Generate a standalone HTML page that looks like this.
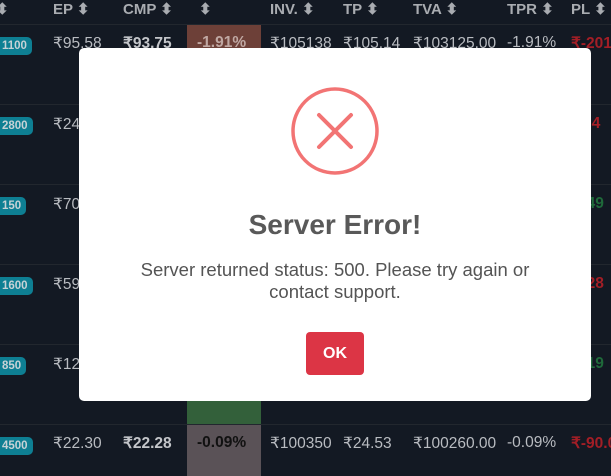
<!DOCTYPE html>
<html><head><style>
body{margin:0;width:611px;height:476px;overflow:hidden;background:#131923;font-family:"Liberation Sans",Arial,sans-serif;position:relative;color:#b9bcc1}
.a{position:absolute;white-space:nowrap;font-size:15.5px}
.h{font-weight:bold;color:#a9acb1;font-size:15px}
.line{position:absolute;left:0;width:611px;height:1px;background:#22272e}
.badge{position:absolute;left:-6px;background:#0e7f93;color:#c6d2d6;font-size:11.5px;font-weight:bold;border-radius:5px;padding:2px 5px 2px 8px;line-height:14px}
.cell{position:absolute;left:187px;width:74px}
.r{color:#a31e26;font-weight:bold}.g{color:#1f6a3a;font-weight:bold}
.modal{position:absolute;left:79px;top:48px;width:512px;height:353px;background:#fff;border-radius:5px}
</style></head><body>
<div class="a h" style="left:53px;top:0">EP ⬍</div>
<div class="a h" style="left:123px;top:0">CMP ⬍</div>
<div class="a h" style="left:199px;top:0">⬍</div>
<div class="a h" style="left:270px;top:0">INV. ⬍</div>
<div class="a h" style="left:343px;top:0">TP ⬍</div>
<div class="a h" style="left:413px;top:0">TVA ⬍</div>
<div class="a h" style="left:507px;top:0">TPR ⬍</div>
<div class="a h" style="left:571px;top:0">PL ⬍</div>
<div class="a h" style="left:-4px;top:0">⬍</div>
<div class="line" style="top:24px"></div><div class="line" style="top:104px"></div><div class="line" style="top:184px"></div><div class="line" style="top:264px"></div><div class="line" style="top:344px"></div><div class="line" style="top:424px"></div>
<div class="cell" style="top:25px;height:79px;background:#6d4038"></div>
<div class="cell" style="top:344px;height:80px;background:#33603a"></div>
<div class="cell" style="top:425px;height:51px;background:#5a5257"></div>
<div class="badge" style="top:37px">1100</div>
<div class="badge" style="top:117px">2800</div>
<div class="badge" style="top:197px">150</div>
<div class="badge" style="top:277px">1600</div>
<div class="badge" style="top:357px">850</div>
<div class="badge" style="top:437px">4500</div>
<div class="a" style="left:53px;top:34px">₹95.58</div><div class="a" style="left:123px;top:34px;font-weight:bold;color:#c4c6ca">₹93.75</div><div class="a" style="left:197px;top:34px;font-weight:bold;color:#c0a8a3">-1.91%</div><div class="a" style="left:270px;top:34px">₹105138</div><div class="a" style="left:343px;top:34px">₹105.14</div><div class="a" style="left:413px;top:34px">₹103125.00</div><div class="a" style="left:507px;top:34px">-1.91%</div><div class="a r" style="left:571px;top:34px">₹-2013</div>
<div class="a" style="left:53px;top:115px">₹245</div><div class="a r" style="left:578px;top:115px">-34</div>
<div class="a" style="left:53px;top:195px">₹705</div><div class="a g" style="left:578px;top:195px">549</div>
<div class="a" style="left:53px;top:275px">₹595</div><div class="a r" style="left:578px;top:275px">228</div>
<div class="a" style="left:53px;top:355px">₹124</div><div class="a g" style="left:578px;top:355px">819</div>
<div class="a" style="left:53px;top:434px">₹22.30</div><div class="a" style="left:123px;top:434px;font-weight:bold;color:#c4c6ca">₹22.28</div><div class="a" style="left:197px;top:434px;font-weight:bold;color:#111">-0.09%</div><div class="a" style="left:270px;top:434px">₹100350</div><div class="a" style="left:343px;top:434px">₹24.53</div><div class="a" style="left:413px;top:434px">₹100260.00</div><div class="a" style="left:507px;top:434px">-0.09%</div><div class="a r" style="left:571px;top:434px">₹-90.0</div>
<div class="modal">
<svg style="position:absolute;left:211px;top:38px" width="90" height="90" viewBox="0 0 90 90"><circle cx="45" cy="45" r="42" fill="none" stroke="#f27474" stroke-width="3.5"/><path d="M29 29L61 61M61 29L29 61" stroke="#f27474" stroke-width="4" stroke-linecap="round"/></svg>
<div style="position:absolute;left:0;width:512px;top:161px;text-align:center;font-size:28px;font-weight:bold;color:#595959">Server Error!</div>
<div style="position:absolute;left:0;width:512px;top:211px;text-align:center;font-size:18.5px;line-height:22px;color:#545454">Server returned status: 500. Please try again or<br>contact support.</div>
<div style="position:absolute;left:227px;top:284px;width:58px;height:43px;background:#dc3545;border-radius:4px;color:#fff;font-size:16px;font-weight:bold;text-align:center;line-height:43px">OK</div>
</div>
</body></html>
